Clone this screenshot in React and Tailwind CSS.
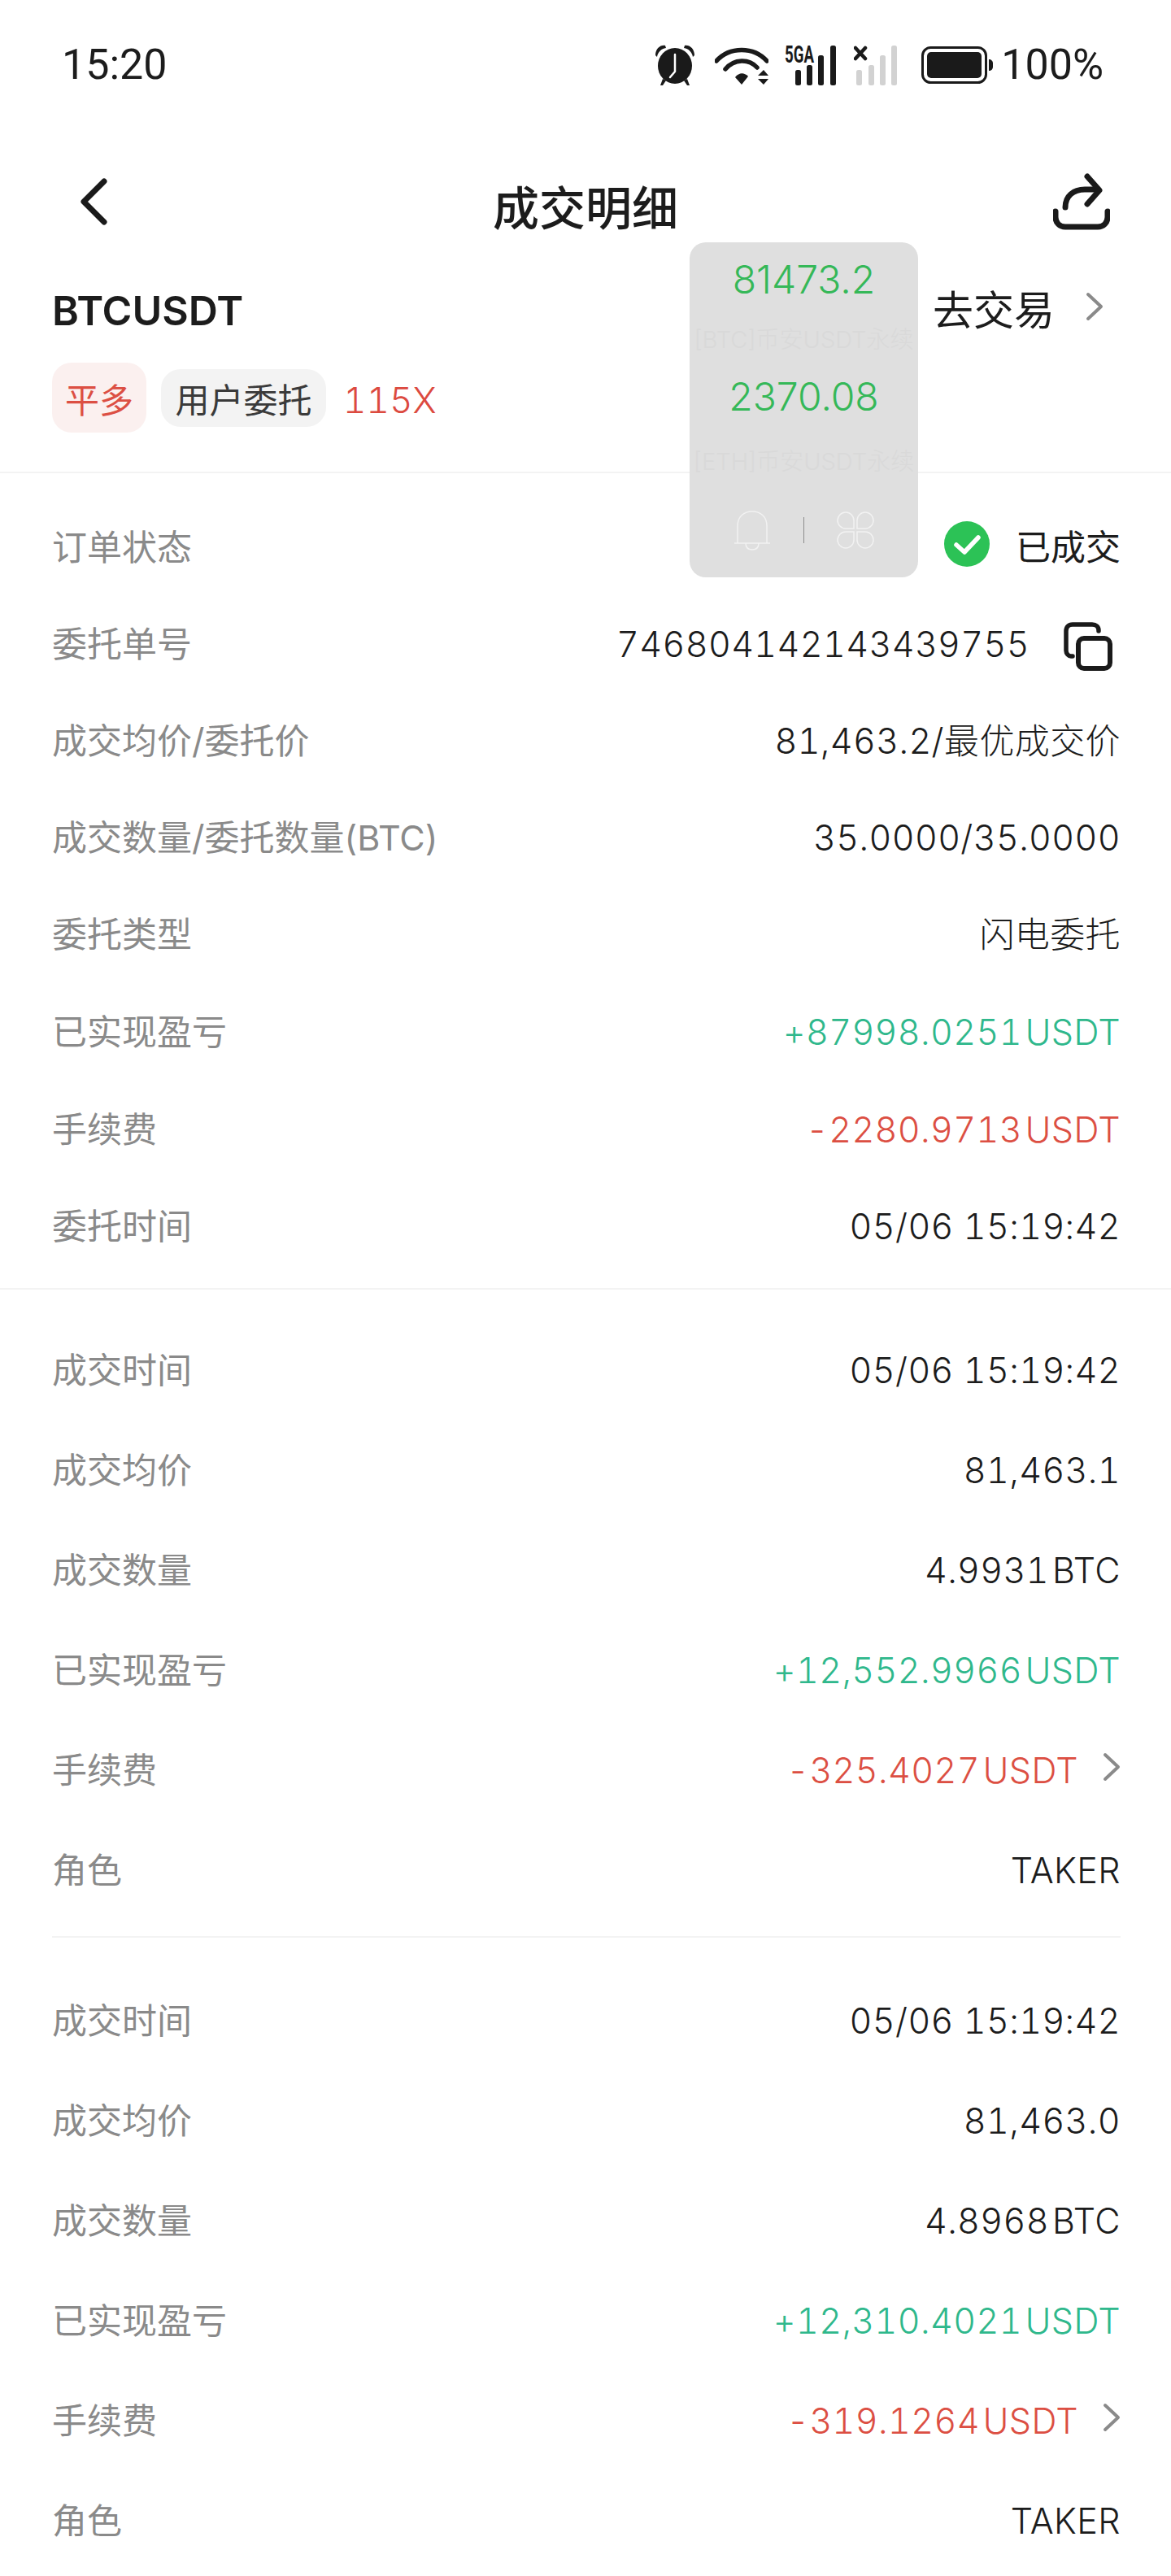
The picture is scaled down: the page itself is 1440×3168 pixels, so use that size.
import React from 'react';

const sectionOne = [
  { label: '委托类型', value: '闪电委托', h: 'h-[119px]' },
  { label: '已实现盈亏', value: '+87998.0251 USDT', tone: 'green', h: 'h-[120px]' },
  { label: '手续费', value: '-2280.9713 USDT', tone: 'red', h: 'h-[120px]' },
  { label: '委托时间', value: '05/06 15:19:42', h: 'h-[119px]' },
];

const fillOne = [
  { label: '成交时间', value: '05/06 15:19:42' },
  { label: '成交均价', value: '81,463.1' },
  { label: '成交数量', value: '4.9931 BTC', tight: true },
  { label: '已实现盈亏', value: '+12,552.9966 USDT', tone: 'green', tight: true },
  { label: '手续费', value: '-325.4027 USDT', tone: 'red', more: true, tight: true },
  { label: '角色', value: 'TAKER' },
];

const fillTwo = [
  { label: '成交时间', value: '05/06 15:19:42' },
  { label: '成交均价', value: '81,463.0' },
  { label: '成交数量', value: '4.8968 BTC', tight: true },
  { label: '已实现盈亏', value: '+12,310.4021 USDT', tone: 'green', tight: true },
  { label: '手续费', value: '-319.1264 USDT', tone: 'red', more: true, tight: true },
  { label: '角色', value: 'TAKER' },
];

function valueColor(tone) {
  if (tone === 'green') return 'text-[#2fb88c]';
  if (tone === 'red') return 'text-[#dc4f43]';
  return 'text-[#1c1c1c]';
}

function Chevron({ className, color = '#8a8a8a' }) {
  return (
    <svg className={className} viewBox="0 0 22 36" fill="none">
      <path d="M3 3l16 15L3 33" stroke={color} strokeWidth="4" strokeLinecap="round" strokeLinejoin="round" />
    </svg>
  );
}

function Row({ label, value, tone, more, tight, h = 'h-[123px]', children }) {
  return (
    <div className={`flex items-center justify-between ${h}`}>
      <span className="text-[43px] text-[#8a8a8a]">{label}</span>
      {children || (
        <div className="flex items-center">
          <span className={`text-[43px] font-light tabular-nums tracking-[0.4px] ${tight ? '[word-spacing:-8px]' : ''} ${valueColor(tone)}`}>{value}</span>
          {more && <Chevron className="ml-[30px] w-[22px] h-[36px] mb-[10px]" />}
        </div>
      )}
    </div>
  );
}

function AlarmIcon() {
  return (
    <svg className="w-[50px] h-[50px]" viewBox="0 0 50 50">
      <path d="M1 13C1 5 7 0 13 1L14 4C8 5 4 9 3 15Z" fill="#1a1a1a" />
      <path d="M49 13C49 5 43 0 37 1L36 4C42 5 46 9 47 15Z" fill="#1a1a1a" />
      <ellipse cx="25" cy="26" rx="21" ry="22" fill="#1a1a1a" />
      <path d="M10 42l-3 8h3l4-6zM40 42l3 8h-3l-4-6z" fill="#1a1a1a" />
      <path d="M25 12v21l-6 7" stroke="#fff" strokeWidth="2.5" fill="none" strokeLinecap="round" strokeLinejoin="round" />
    </svg>
  );
}

function WifiIcon() {
  return (
    <svg className="w-[66px] h-[50px]" viewBox="0 0 66 50" fill="none">
      <path d="M2 20C18 2 48 2 64 20" stroke="#1a1a1a" strokeWidth="5.5" strokeLinecap="round" />
      <path d="M13 30C24 17 42 17 52 28" stroke="#1a1a1a" strokeWidth="5.5" strokeLinecap="round" />
      <path d="M25 40c5-6 11-6 16-1l-8 10z" fill="#1a1a1a" />
      <path d="M53 38l7-7 6 7zM53 42h13l-6 7z" fill="#1a1a1a" />
    </svg>
  );
}

function SignalFiveG() {
  return (
    <svg className="w-[64px] h-[50px] overflow-visible" viewBox="0 0 64 50">
      <text x="0" y="22" fontSize="30" fontWeight="700" fontFamily="Roboto, sans-serif" fill="#1a1a1a" textLength="36" lengthAdjust="spacingAndGlyphs">5GA</text>
      <rect x="13" y="31" width="7" height="19" rx="2.5" fill="#1a1a1a" />
      <rect x="27" y="25" width="7" height="25" rx="2.5" fill="#1a1a1a" />
      <rect x="41" y="13" width="7" height="37" rx="2.5" fill="#1a1a1a" />
      <rect x="56" y="1" width="7" height="49" rx="2.5" fill="#1a1a1a" />
    </svg>
  );
}

function SignalEmpty() {
  return (
    <svg className="w-[54px] h-[50px]" viewBox="0 0 54 50">
      <path d="M2 4l12 13M14 4L2 17" stroke="#1a1a1a" strokeWidth="4.5" strokeLinecap="round" />
      <rect x="3" y="31" width="7" height="19" rx="2.5" fill="#d2d2d2" />
      <rect x="18" y="25" width="7" height="25" rx="2.5" fill="#d2d2d2" />
      <rect x="32" y="13" width="7" height="37" rx="2.5" fill="#d2d2d2" />
      <rect x="46" y="1" width="7" height="49" rx="2.5" fill="#d2d2d2" />
    </svg>
  );
}

function BatteryIcon() {
  return (
    <svg className="w-[88px] h-[46px]" viewBox="0 0 88 46">
      <rect x="1.5" y="1.5" width="78" height="43" rx="10" fill="none" stroke="#1a1a1a" strokeWidth="3" />
      <rect x="7" y="7" width="67" height="32" rx="5" fill="#1a1a1a" />
      <path d="M83 16c3 0 5 2 5 5v4c0 3-2 5-5 5z" fill="#1a1a1a" />
    </svg>
  );
}

function ShareIcon() {
  return (
    <svg className="w-[70px] h-[70px]" viewBox="0 0 70 70" fill="none">
      <path d="M15 42c0-14 10-22 24-22h14" stroke="#1a1a1a" strokeWidth="7" strokeLinecap="round" />
      <path d="M42 4l15 17-15 17" stroke="#1a1a1a" strokeWidth="7" strokeLinecap="round" strokeLinejoin="round" />
      <path d="M3 47v7c0 7 5 12 12 12h40c7 0 12-5 12-12v-7" stroke="#1a1a1a" strokeWidth="7" strokeLinecap="round" />
    </svg>
  );
}

function CopyIcon() {
  return (
    <svg className="w-[60px] h-[60px]" viewBox="0 0 60 60" fill="none">
      <path d="M11 42H9c-3 0-6-3-6-7V11c0-5 3-8 8-8h24c5 0 8 3 8 7v1" stroke="#1a1a1a" strokeWidth="5.5" strokeLinecap="round" />
      <rect x="18" y="20" width="39" height="37" rx="7" stroke="#1a1a1a" strokeWidth="6" />
    </svg>
  );
}

function CheckBadge() {
  return (
    <svg className="w-[56px] h-[56px] mt-[-10px]" viewBox="0 0 56 56">
      <circle cx="28" cy="28" r="28" fill="#2cc256" />
      <path d="M15 29l10 9 17-18" fill="none" stroke="#fff" strokeWidth="5.5" strokeLinecap="round" strokeLinejoin="round" />
    </svg>
  );
}

// Fenêtre flottante de prix, posée au-dessus de la page
function FloatingPanel() {
  return (
    <div className="absolute left-[848px] top-[298px] w-[281px] h-[412px] rounded-[20px] bg-[#dfdfdf] flex flex-col items-center">
      <div className="mt-[16px] h-[60px] leading-[60px] text-[48px] font-light text-[#35b858]">81473.2</div>
      <div className="mt-[24px] h-[40px] leading-[40px] text-[29px] font-light text-[#d9d9d9] whitespace-nowrap">[BTC]币安USDT永续</div>
      <div className="mt-[20px] h-[60px] leading-[60px] text-[48px] font-light text-[#35b858]">2370.08</div>
      <div className="mt-[30px] h-[40px] leading-[40px] text-[29px] font-light text-[#d9d9d9] whitespace-nowrap">[ETH]币安USDT永续</div>
      <div className="mt-[38px] flex items-center h-[52px]">
        <svg className="w-[46px] h-[50px]" viewBox="0 0 46 50" fill="none" stroke="#f2f2f2" strokeWidth="1.5">
          <path d="M5 41V20C5 8 13 2 23 2s18 6 18 18v21" />
          <path d="M1 41h44" />
          <path d="M15 41c0 5 3 8 8 8s8-3 8-8" />
        </svg>
        <div className="mx-[40px] w-[1px] h-[32px] bg-[#8c8c8c]" />
        <svg className="w-[46px] h-[46px]" viewBox="0 0 46 46" fill="none" stroke="#f2f2f2" strokeWidth="1.5">
          <path d="M21 21H11A10 10 0 1 1 21 11zM25 21V11a10 10 0 1 1 10 10zM21 25v10a10 10 0 1 1-10-10zM25 25h10a10 10 0 1 1-10 10z" />
        </svg>
      </div>
    </div>
  );
}

export default function App() {
  return (
    <div className="relative w-[1440px] h-[3168px] overflow-hidden bg-white font-[family-name:Inter,'Noto_Sans_CJK_SC',sans-serif] text-[#1c1c1c]">
      {/* Barre d'état */}
      <div className="flex items-center justify-between h-[160px] pl-[76px] pr-[83px] font-[family-name:Roboto,sans-serif]">
        <span className="text-[52px] leading-none">15:20</span>
        <div className="flex items-center">
          <AlarmIcon />
          <div className="ml-[24px]"><WifiIcon /></div>
          <div className="ml-[20px]"><SignalFiveG /></div>
          <div className="ml-[21px]"><SignalEmpty /></div>
          <div className="ml-[29px]"><BatteryIcon /></div>
          <span className="ml-[10px] text-[52px] leading-none">100%</span>
        </div>
      </div>

      {/* Navigation */}
      <div className="grid grid-cols-[1fr_auto_1fr] items-center h-[192px] px-[75px]">
        <svg className="ml-[23px] w-[34px] h-[58px] mt-[-16px]" viewBox="0 0 34 58" fill="none">
          <path d="M30 4L5 29l25 25" stroke="#1a1a1a" strokeWidth="7" strokeLinecap="round" strokeLinejoin="round" />
        </svg>
        <h1 className="text-[57px] font-medium leading-none">成交明细</h1>
        <div className="flex justify-end mt-[-16px]"><ShareIcon /></div>
      </div>

      {/* Symbole */}
      <div className="flex items-center justify-between h-[52px] pt-[8px] pl-[64px] pr-[83px]">
        <span className="text-[50px] font-semibold leading-none">BTCUSDT</span>
        <div className="flex items-center">
          <span className="text-[50px] leading-none">去交易</span>
          <Chevron className="ml-[38px] w-[22px] h-[36px] mb-[10px]" />
        </div>
      </div>

      {/* Étiquettes */}
      <div className="flex items-center pl-[64px] pt-[42px] pb-[48px] border-b-2 border-[#f3f3f3]">
        <span className="flex items-center justify-center w-[116px] h-[86px] pt-[6px] rounded-[24px] bg-[#fbf0ef] text-[42px] text-[#dc4f43]">平多</span>
        <span className="flex items-center justify-center ml-[18px] w-[203px] h-[71px] pt-[6px] rounded-[24px] bg-[#f3f3f3] text-[42px] text-[#3a3a3a]">用户委托</span>
        <span className="ml-[21px] pt-[6px] text-[44px] font-light tabular-nums text-[#dc4a3f]">115X</span>
      </div>

      {/* Détail de l'ordre */}
      <div className="pl-[64px] pr-[62px] pt-[32px] pb-[16px] border-b-2 border-[#f3f3f3]">
        <Row label="订单状态" h="h-[119px]">
          <div className="flex items-center">
            <CheckBadge />
            <span className="ml-[32px] text-[43px]">已成交</span>
          </div>
        </Row>
        <Row label="委托单号" h="h-[119px]">
          <div className="flex items-center">
            <span className="text-[43px] font-light tabular-nums tracking-[0.4px]">746804142143439755</span>
            <div className="ml-[42px] mr-[10px] mt-[4px]"><CopyIcon /></div>
          </div>
        </Row>
        <Row label="成交均价/委托价" value="81,463.2/最优成交价" h="h-[119px]" />
        <Row label="成交数量/委托数量(BTC)" value="35.0000/35.0000" h="h-[119px]" />
        {sectionOne.map((row) => (
          <Row key={row.label} {...row} tight={row.tone !== undefined} />
        ))}
      </div>

      {/* Premier remplissage */}
      <div className="ml-[64px] mr-[62px] pt-[38px] pb-[19px] border-b-2 border-[#f3f3f3]">
        {fillOne.map((row) => (
          <Row key={row.label} {...row} />
        ))}
      </div>

      {/* Second remplissage */}
      <div className="ml-[64px] mr-[62px] pt-[41px]">
        {fillTwo.map((row) => (
          <Row key={row.label} {...row} />
        ))}
      </div>

      <FloatingPanel />
    </div>
  );
}
